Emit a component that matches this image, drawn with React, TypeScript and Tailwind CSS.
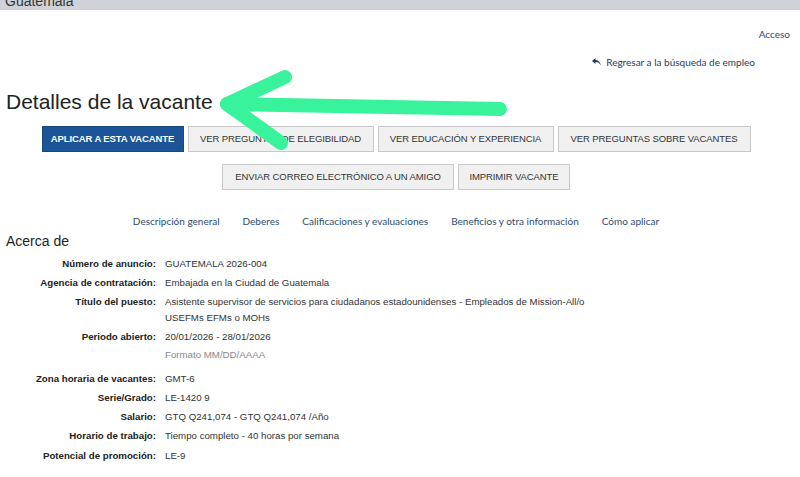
const buttonsTop = [
  { label: 'APLICAR A ESTA VACANTE', w: 'w-[142px]', primary: true },
  { label: 'VER PREGUNTAS DE ELEGIBILIDAD', w: 'w-[186px]' },
  { label: 'VER EDUCACIÓN Y EXPERIENCIA', w: 'w-[176px]' },
  { label: 'VER PREGUNTAS SOBRE VACANTES', w: 'w-[193px]' },
];

const buttonsBottom = [
  { label: 'ENVIAR CORREO ELECTRÓNICO A UN AMIGO', w: 'w-[232px]' },
  { label: 'IMPRIMIR VACANTE', w: 'w-[112px]' },
];

const navLinks = [
  'Descripción general',
  'Deberes',
  'Calificaciones y evaluaciones',
  'Beneficios y otra información',
  'Cómo aplicar',
];

type Btn = { label: string; w: string; primary?: boolean };

function ActionButton({ label, w, primary }: Btn) {
  return (
    <button
      className={`${w} h-[26px] flex items-center justify-center border text-[9.5px] tracking-[-0.1px] ${
        primary
          ? 'bg-[#1b5597] border-[#16477f] text-white font-semibold'
          : 'bg-[#f0f0f0] border-[#c9c9c9] text-[#333]'
      }`}
    >
      {label}
    </button>
  );
}

function Field({ label, children, className = '' }: { label: string; children: React.ReactNode; className?: string }) {
  return (
    <div className={`flex leading-[16px] ${className}`}>
      <div className="w-[156px] shrink-0 text-right font-bold text-[#222]">{label}</div>
      <div className="pl-[9px] text-[#333]">{children}</div>
    </div>
  );
}

function ReplyIcon() {
  return (
    <svg width="9" height="8" viewBox="0 0 18 16" className="mr-[5px] fill-[#1e3d5c]">
      <path d="M7 0 L0 6 L7 12 L7 8.2 C12 8 15 10 17.5 15.5 C17 9 13.5 4.3 7 3.8 Z" />
    </svg>
  );
}

function GreenArrow() {
  return (
    <svg className="pointer-events-none absolute left-0 top-0" width="800" height="477">
      <g stroke="#38f39b" strokeWidth="14" strokeLinecap="round" strokeLinejoin="round" fill="none">
        <path d="M500 109 L227 104" />
        <path d="M285 77 L227 104 L281 143" />
      </g>
    </svg>
  );
}

export default function App() {
  return (
    <div className="relative w-[800px] h-[477px] overflow-hidden bg-white font-['Liberation_Sans',Arial,sans-serif]">
      <div className="h-[10px] bg-[#cfd3d9] overflow-hidden">
        <div className="-mt-[7px] pl-[5px] text-[14px] leading-[16px] text-[#333]">Guatemala</div>
      </div>

      <div className="flex justify-end pr-[10px] pt-[18px] font-['Lato',sans-serif] text-[10px] leading-[12px] text-[#2c4a68]">
        Acceso
      </div>

      <div className="flex justify-end pr-[45px] pt-[16px] font-['Lato',sans-serif] text-[10px] leading-[12px] text-[#1e3d5c]">
        <span className="flex items-center">
          <ReplyIcon />
          Regresar a la búsqueda de empleo
        </span>
      </div>

      <h1 className="pl-[6px] pt-[21px] text-[21px] leading-[26px] text-[#222]">Detalles de la vacante</h1>

      <div className="w-[792px]">
        <div className="flex justify-center gap-[4px] pt-[11px]">
          {buttonsTop.map((b) => (
            <ActionButton key={b.label} {...b} />
          ))}
        </div>
        <div className="flex justify-center gap-[4px] pt-[12px]">
          {buttonsBottom.map((b) => (
            <ActionButton key={b.label} {...b} />
          ))}
        </div>

        <nav className="flex justify-center gap-[23px] pt-[24px] font-['Lato',sans-serif] text-[10px] leading-[14px] text-[#2a4d70]">
          {navLinks.map((l) => (
            <a key={l}>{l}</a>
          ))}
        </nav>
      </div>

      <h2 className="pl-[6px] pt-[3px] text-[14px] leading-[20px] text-[#222]">Acerca de</h2>

      <div className="pt-[5px] text-[9.7px]">
        <Field label="Número de anuncio:" className="mb-[3px]">GUATEMALA 2026-004</Field>
        <Field label="Agencia de contratación:" className="mb-[3px]">Embajada en la Ciudad de Guatemala</Field>
        <Field label="Título del puesto:" className="mb-[3px]">
          Asistente supervisor de servicios para ciudadanos estadounidenses - Empleados de Mission-All/o
          <br />
          USEFMs EFMs o MOHs
        </Field>
        <Field label="Periodo abierto:" className="mb-[2px]">20/01/2026 - 28/01/2026</Field>
        <Field label="" className="mb-[8px]">
          <span className="text-[#888]">Formato MM/DD/AAAA</span>
        </Field>
        <Field label="Zona horaria de vacantes:" className="mb-[3px]">GMT-6</Field>
        <Field label="Serie/Grado:" className="mb-[3px]">LE-1420 9</Field>
        <Field label="Salario:" className="mb-[3px]">GTQ Q241,074 - GTQ Q241,074 /Año</Field>
        <Field label="Horario de trabajo:" className="mb-[4px]">Tiempo completo - 40 horas por semana</Field>
        <Field label="Potencial de promoción:">LE-9</Field>
      </div>

      <GreenArrow />
    </div>
  );
}
